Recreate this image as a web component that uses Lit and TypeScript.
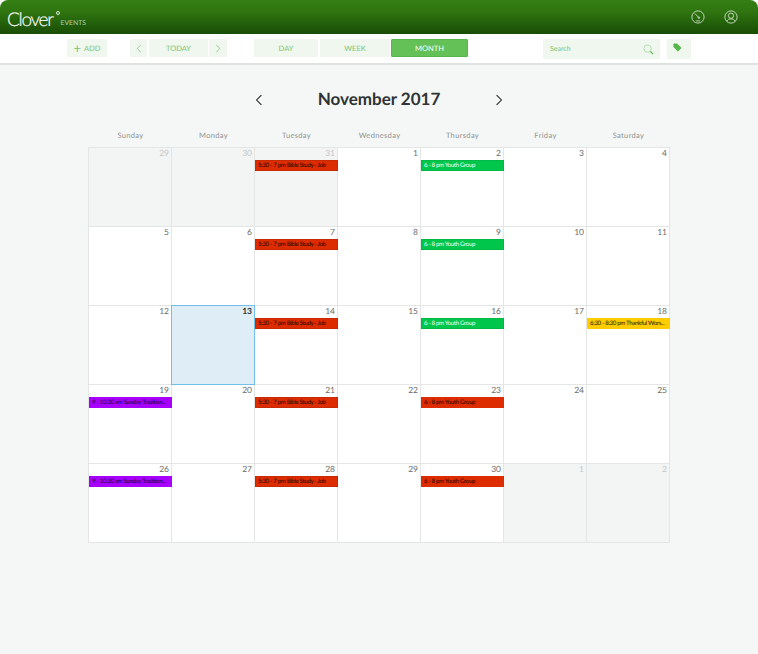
import { LitElement, html, css, svg } from "lit";
import { customElement } from "lit/decorators.js";

type Ev = { t: string; c: string };
const bible: Ev = { t: "5:30 - 7 pm Bible Study - Job", c: "red" };
const youth: Ev = { t: "6 - 8 pm Youth Group", c: "green" };
const youthRed: Ev = { t: "6 - 8 pm Youth Group", c: "red2" };
const thanks: Ev = { t: "6:30 - 8:30 pm Thankful Wors...", c: "yellow" };
const sunday: Ev = { t: "9 - 10:30 am Sunday Tradition...", c: "purple" };

type Cell = { d: number; other?: boolean; today?: boolean; ev?: Ev };
const cells: Cell[] = [
  { d: 29, other: true }, { d: 30, other: true }, { d: 31, other: true, ev: bible }, { d: 1 }, { d: 2, ev: youth }, { d: 3 }, { d: 4 },
  { d: 5 }, { d: 6 }, { d: 7, ev: bible }, { d: 8 }, { d: 9, ev: youth }, { d: 10 }, { d: 11 },
  { d: 12 }, { d: 13, today: true }, { d: 14, ev: bible }, { d: 15 }, { d: 16, ev: youth }, { d: 17 }, { d: 18, ev: thanks },
  { d: 19, ev: sunday }, { d: 20 }, { d: 21, ev: bible }, { d: 22 }, { d: 23, ev: youthRed }, { d: 24 }, { d: 25 },
  { d: 26, ev: sunday }, { d: 27 }, { d: 28, ev: bible }, { d: 29 }, { d: 30, ev: youthRed }, { d: 1, other: true }, { d: 2, other: true },
];
const days = ["Sunday", "Monday", "Tuesday", "Wednesday", "Thursday", "Friday", "Saturday"];

const chev = (dir: "l" | "r", cls: string) => html`<svg class=${cls} viewBox="0 0 10 14" fill="none" stroke="currentColor" stroke-width="1.3">
  ${svg`<path d=${dir === "l" ? "M8 1 L2 7 L8 13" : "M2 1 L8 7 L2 13"} />`}
</svg>`;

@customElement("app-root")
export class AppRoot extends LitElement {
  static styles = css`
    :host { display: block; width: 758px; height: 654px; background: #fff; font-family: Lato, "Liberation Sans", sans-serif; overflow: hidden; text-rendering: geometricPrecision; }
    .topbar { height: 34px; box-sizing: border-box; border-bottom: 1px solid #174d05; border-radius: 8px 8px 0 0;
      background: linear-gradient(#347f13 0%, #2f7510 35%, #1a4f06 100%);
      display: flex; align-items: center; padding: 6px 20px 0 7px; color: #fff; }
    .logo { font-size: 19px; font-weight: 300; letter-spacing: -1.3px; line-height: 20px; color: #fbfdfa; -webkit-text-stroke: 0.2px #fbfdfa; }
    .reg { width: 2px; height: 2px; border: 0.5px solid #dfe9da; border-radius: 50%; margin: -13px 0 0 3px; }
    .sub { font-size: 6.8px; color: #b9cfb0; margin: 6px 0 0 1px; }
    .sp { flex: 1; }
    .topico { width: 14px; height: 14px; color: #e6efe2; margin-top: -6px; display: block; }
    .topico + .topico { margin-left: 19px; }
    .toolbar { height: 31px; box-sizing: border-box; background: #fff; border-bottom: 2px solid #dfe2e1; display: flex; align-items: flex-start; padding: 5px 0 0 67px; }
    .b { height: 18px; background: #eff7ee; color: #7cc472; font-size: 7.5px; display: flex; align-items: center; justify-content: center; border-radius: 1px; flex: none; }
    .add { width: 40px; gap: 3px; }
    .add span.p { font-size: 13px; line-height: 12px; }
    .nav { width: 17px; margin-left: 23px; }
    .nav.n2 { width: 18px; margin-left: 1px; }
    .nav svg { width: 6px; height: 9px; }
    .today { width: 59px; margin-left: 2px; }
    .day { width: 64px; margin-left: 27px; }
    .week { width: 70px; margin-left: 2px; }
    .month { width: 77px; margin-left: 1px; background: #63c158; color: #fff; border: 1px solid #55b64a; box-sizing: border-box; }
    .search { width: 117px; height: 20px; margin-left: 75px; justify-content: space-between; padding: 0 6px 0 7px; box-sizing: border-box; font-size: 7px; }
    .search svg { width: 11px; height: 11px; }
    .tag { width: 24px; height: 20px; margin-left: 7px; }
    .tag svg { width: 9px; height: 9px; margin: -3px 0 0 -4px; }
    main { background: #f5f7f6; height: 589px; display: flex; flex-direction: column; }
    .mhead { height: 67px; display: flex; align-items: center; justify-content: center; }
    .mhead svg { width: 8px; height: 12px; color: #1d1f20; margin-top: 3px; }
    h1 { margin: 0; width: 232px; text-align: center; font-size: 17px; font-weight: 700; color: #2f3334; line-height: 22px; margin-top: 1px; }
    .dow { display: grid; grid-template-columns: repeat(7, 83px); margin-left: 89px; height: 15px; margin-top: -1px; padding-bottom: 1px; }
    .dow div { text-align: center; font-size: 7.5px; color: #8f9292; letter-spacing: 0.35px; line-height: 10px; }
    .grid { display: grid; grid-template-columns: repeat(7, 83px); grid-auto-rows: 79px; width: 582px; box-sizing: border-box; margin-left: 88px; border-top: 1px solid #e4e6e5; border-left: 1px solid #e4e6e5; }
    .cell { background: #fff; box-sizing: border-box; position: relative; margin: -1px 0 0 -1px; width: 84px; height: 80px; border: 1px solid #e4e6e5; }
    .cell.other { background: #f3f4f4; }
    .cell.today { background: #dfeef6; border-color: #72bfe9; z-index: 1; }
    .num { text-align: right; font-size: 8.5px; line-height: 10px; color: #6a6d6e; padding: 0 2px 0 0; height: 10px; }
    .other .num { color: #c5c8c8; }
    .today .num { color: #2f3334; font-weight: 700; }
    .ev { position: absolute; left: 0; right: -1px; top: 12px; height: 11px; box-sizing: border-box; font-size: 6.1px; letter-spacing: -0.33px; line-height: 9px; padding-left: 2px; white-space: nowrap; z-index: 2; }
    .ev.red { background: #dc2c00; color: #1c0500; border: 1px solid #c52a05; }
    .ev.red2 { background: #dc2c00; color: #1c0500; border: 1px solid #dc2c00; }
    .ev.green { background: #00c74c; color: #f2fff6; border: 1px solid #00b846; }
    .ev.yellow { background: #ffcc00; color: #201a00; border: 1px solid #ffcc00; }
    .ev.purple { background: #a800ff; color: #14001f; border: 1px solid #a800ff; }
  `;

  render() {
    return html`
      <header class="topbar">
        <span class="logo">Clover</span><span class="reg"></span><span class="sub">EVENTS</span>
        <span class="sp"></span>
        <svg class="topico" viewBox="0 0 16 16" fill="none" stroke="currentColor" stroke-width="0.9">
          <circle cx="8" cy="8" r="7"/><path d="M4.5 4 L8.6 8.4"/><circle cx="9" cy="8.8" r="0.9"/><path d="M5.5 12.5 H10.5"/>
        </svg>
        <svg class="topico" viewBox="0 0 16 16" fill="none" stroke="currentColor" stroke-width="0.9">
          <circle cx="8" cy="8" r="7"/><circle cx="8" cy="6.5" r="3"/><path d="M3.3 13 C4.3 10.6 6 10.2 8 10.2 C10 10.2 11.7 10.6 12.7 13"/>
        </svg>
      </header>
      <div class="toolbar">
        <div class="b add"><span class="p">+</span>ADD</div>
        <div class="b nav">${chev("l", "")}</div>
        <div class="b today">TODAY</div>
        <div class="b nav n2">${chev("r", "")}</div>
        <div class="b day">DAY</div>
        <div class="b week">WEEK</div>
        <div class="b month">MONTH</div>
        <div class="b search"><span>Search</span>
          <svg viewBox="0 0 12 12" fill="none" stroke="#a9d9a3" stroke-width="0.9"><circle cx="5" cy="5" r="4"/><path d="M8 8 L11 11" stroke="#5cb852" stroke-width="1.4"/></svg>
        </div>
        <div class="b tag">
          <svg viewBox="0 0 10 10" fill="#55b64a"><path d="M0.5 1.5 Q0.5 0.5 1.5 0.5 L4.5 0.5 L9.5 5.5 L5.5 9.5 L0.5 4.5 Z"/></svg>
        </div>
      </div>
      <main>
        <div class="mhead">
          ${chev("l", "")}
          <h1>November 2017</h1>
          ${chev("r", "")}
        </div>
        <div class="dow">${days.map((d) => html`<div>${d}</div>`)}</div>
        <div class="grid">
          ${cells.map((c) => html`
            <div class="cell ${c.other ? "other" : ""} ${c.today ? "today" : ""}">
              <div class="num">${c.d}</div>
              ${c.ev ? html`<div class="ev ${c.ev.c}">${c.ev.t}</div>` : ""}
            </div>`)}
        </div>
      </main>
    `;
  }
}
